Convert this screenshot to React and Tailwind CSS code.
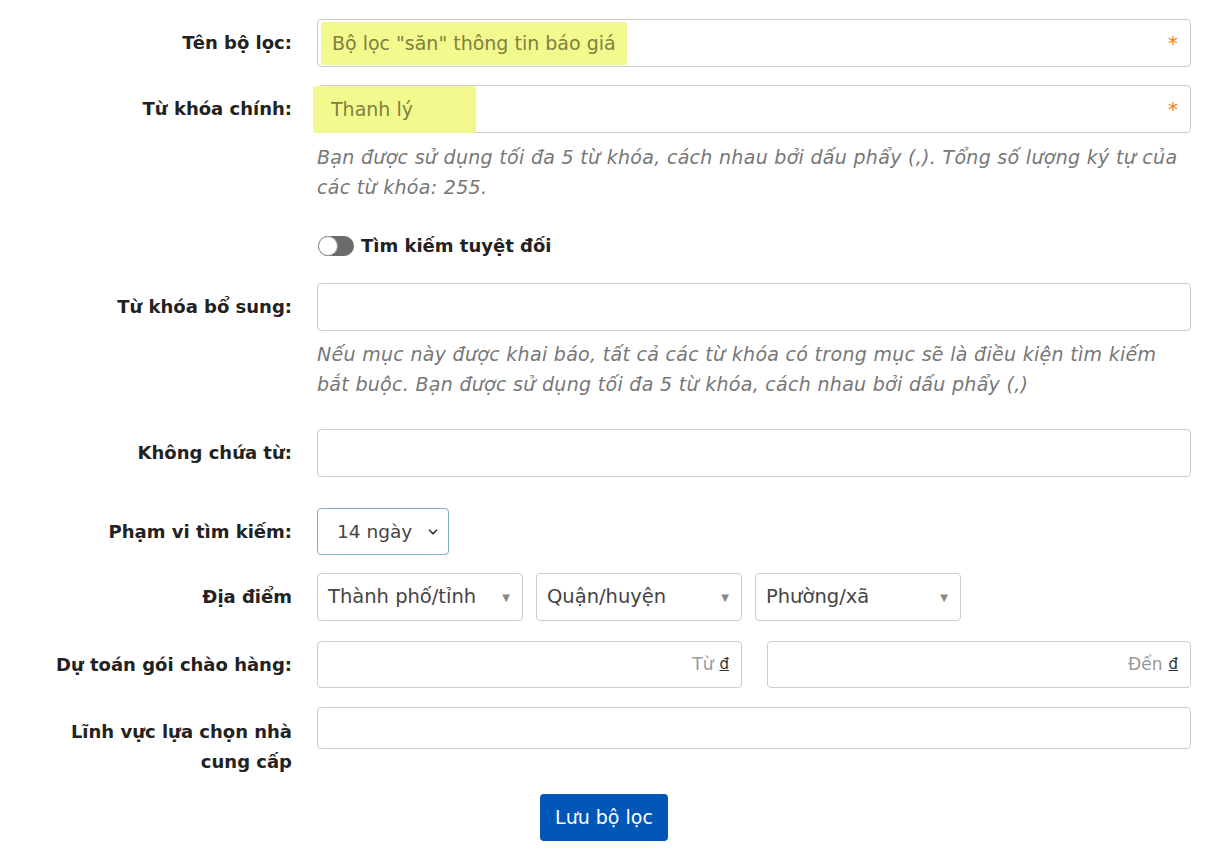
import { ChevronDown } from 'lucide-react';

const font = { fontFamily: '"DejaVu Sans", "Open Sans", sans-serif' };

function Label({ children, className = '' }) {
  return (
    <div className={`w-[292px] shrink-0 text-right text-[18px] font-bold text-[#222] leading-[30px] ${className}`}>
      {children}
    </div>
  );
}

function Caret() {
  return <span className="text-[10px] text-[#888]">▼</span>;
}

function Req() {
  return <span className="text-[20px] text-[#f47b20] leading-none">*</span>;
}

export default function App() {
  return (
    <div className="bg-white w-[1208px] h-[863px] overflow-hidden text-[#333]" style={font}>
      <div className="pt-[19px]">
        {/* Tên bộ lọc */}
        <div className="flex items-center gap-[25px]">
          <Label>Tên bộ lọc:</Label>
          <div className="w-[874px] h-[48px] border border-[#ccc] rounded-[4px] flex items-center justify-between pl-[3px] pr-[12px]">
            <div className="h-[43px] flex items-center bg-[#f2f98d] px-[11px] text-[19px] text-[#80803f] rounded-[2px]">Bộ lọc "săn" thông tin báo giá</div>
            <Req />
          </div>
        </div>

        {/* Từ khóa chính */}
        <div className="flex items-center gap-[25px] mt-[18px]">
          <Label>Từ khóa chính:</Label>
          <div className="w-[874px] h-[48px] border border-[#ccc] rounded-[4px] flex items-center justify-between pr-[12px]">
            <div className="h-[47px] w-[163px] -ml-[5px] flex items-center bg-[#f2f98d] pl-[18px] text-[19px] text-[#80803f] rounded-[3px]">Thanh lý</div>
            <Req />
          </div>
        </div>
        <div className="ml-[317px] mt-[9px] text-[19px] italic text-[#777] leading-[30px] tracking-[0.3px]">
          Bạn được sử dụng tối đa 5 từ khóa, cách nhau bởi dấu phẩy (,). Tổng số lượng ký tự của<br />các từ khóa: 255.
        </div>

        {/* Toggle */}
        <div className="ml-[318px] mt-[30px] flex items-center gap-[7px]">
          <div className="w-[36px] h-[20px] rounded-full bg-[#6b6b6b] relative">
            <div className="absolute left-0 top-0 w-[20px] h-[20px] rounded-full bg-white border border-[#999]"></div>
          </div>
          <span className="text-[18px] font-bold text-[#222]">Tìm kiếm tuyệt đối</span>
        </div>

        {/* Từ khóa bổ sung */}
        <div className="flex items-center gap-[25px] mt-[24px]">
          <Label>Từ khóa bổ sung:</Label>
          <div className="w-[874px] h-[48px] border border-[#ccc] rounded-[4px]"></div>
        </div>
        <div className="ml-[317px] mt-[8px] text-[19px] italic text-[#777] leading-[30px] tracking-[0.3px]">
          Nếu mục này được khai báo, tất cả các từ khóa có trong mục sẽ là điều kiện tìm kiếm<br />bắt buộc. Bạn được sử dụng tối đa 5 từ khóa, cách nhau bởi dấu phẩy (,)
        </div>

        {/* Không chứa từ */}
        <div className="flex items-center gap-[25px] mt-[30px]">
          <Label>Không chứa từ:</Label>
          <div className="w-[874px] h-[48px] border border-[#ccc] rounded-[4px]"></div>
        </div>

        {/* Phạm vi tìm kiếm */}
        <div className="flex items-center gap-[25px] mt-[31px]">
          <Label>Phạm vi tìm kiếm:</Label>
          <div className="w-[132px] h-[47px] border border-[#7fb0bd] rounded-[4px] flex items-center justify-between pl-[19px] pr-[8px] text-[18.5px] text-[#444]">
            <span>14 ngày</span>
            <ChevronDown size={14} strokeWidth={3} className="text-[#333]" />
          </div>
        </div>

        {/* Địa điểm */}
        <div className="flex items-center gap-[25px] mt-[18px]">
          <Label>Địa điểm</Label>
          <div className="flex gap-[13px]">
            {['Thành phố/tỉnh', 'Quận/huyện', 'Phường/xã'].map((t) => (
              <div key={t} className="w-[206px] h-[48px] border border-[#ccc] rounded-[4px] flex items-center justify-between pl-[10px] pr-[12px] text-[19.5px] text-[#444]">
                <span>{t}</span>
                <Caret />
              </div>
            ))}
          </div>
        </div>

        {/* Dự toán */}
        <div className="flex items-center gap-[25px] mt-[20px]">
          <Label>Dự toán gói chào hàng:</Label>
          <div className="flex gap-[25px]">
            <div className="w-[425px] h-[47px] border border-[#ccc] rounded-[4px] flex items-center justify-end pr-[12px] gap-[6px]">
              <span className="text-[17px] text-[#999]">Từ</span>
              <span className="text-[15px] text-[#333] underline">đ</span>
            </div>
            <div className="w-[424px] h-[47px] border border-[#ccc] rounded-[4px] flex items-center justify-end pr-[12px] gap-[6px]">
              <span className="text-[17px] text-[#999]">Đến</span>
              <span className="text-[15px] text-[#333] underline">đ</span>
            </div>
          </div>
        </div>

        {/* Lĩnh vực */}
        <div className="flex items-start gap-[25px] mt-[19px]">
          <Label className="pt-[10px]">Lĩnh vực lựa chọn nhà<br />cung cấp</Label>
          <div className="w-[874px] h-[42px] border border-[#ccc] rounded-[4px]"></div>
        </div>

        {/* Button */}
        <div className="ml-[540px] mt-[17px]">
          <button className="h-[47px] w-[128px] bg-[#0057b8] text-white text-[19px] rounded-[4px]">Lưu bộ lọc</button>
        </div>
      </div>
    </div>
  );
}
